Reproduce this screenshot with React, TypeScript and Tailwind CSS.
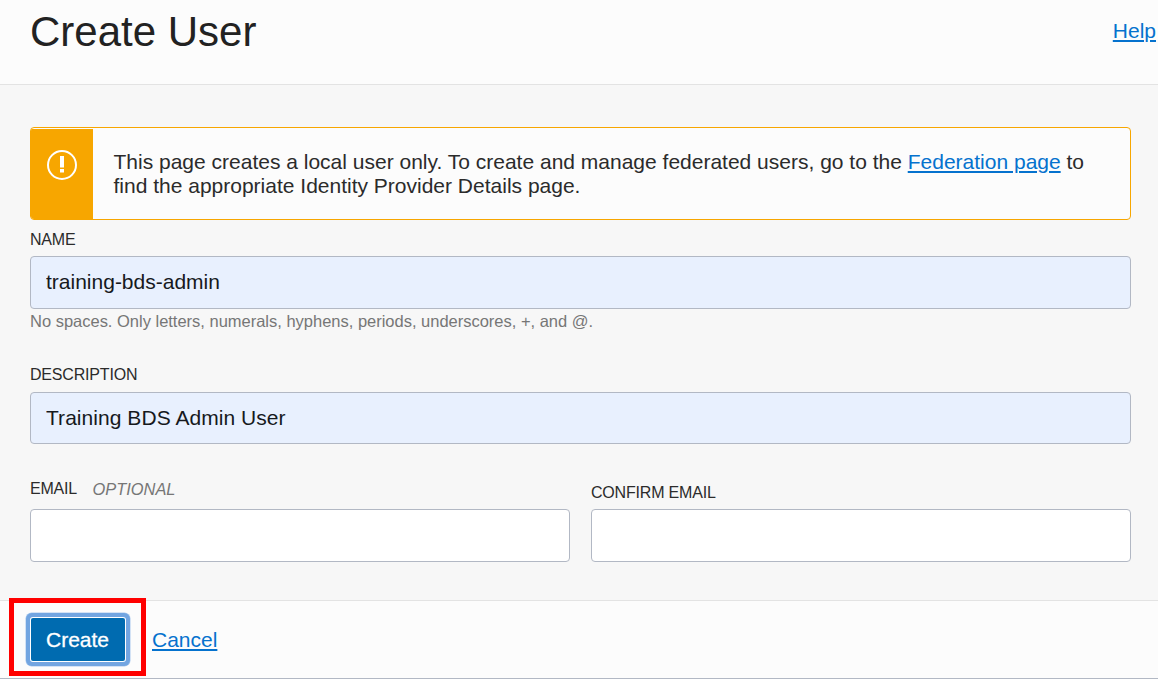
import React from "react";

const inputClass =
  "block w-full rounded-[4px] border border-[#b2b8c4] px-[15px] text-[21px] text-[#16191d] outline-none";
const labelClass = "text-[16px] leading-[20px] tracking-[-0.19px] text-[#2b2b2b] uppercase";
const linkClass = "text-[#0572ce] underline decoration-2 underline-offset-2";

function WarningIcon() {
  return (
    <svg className="h-[30px] w-[30px]" viewBox="0 0 30 30" fill="none">
      <circle cx="15" cy="15" r="14" stroke="#fff" strokeWidth="2" />
      <rect x="13" y="6" width="4" height="11.5" fill="#fff" />
      <rect x="13" y="19" width="4" height="3.5" fill="#fff" />
    </svg>
  );
}

export default function App() {
  return (
    <div className="flex h-[679px] w-[1158px] flex-col overflow-hidden border-b border-[#b2b8c4] bg-[#f7f7f7] font-['Liberation_Sans',Arial,sans-serif] text-[21px] text-[#2b2b2b]">
      <header className="flex h-[85px] shrink-0 items-start justify-between border-b border-[#e3e3e3] bg-[#fcfcfc] pr-[2px] pl-[30px]">
        <h1 className="pt-[8px] text-[42px] leading-[48px] text-[#222]">Create User</h1>
        <a href="#" className={`${linkClass} pt-[19px] leading-[24px]`}>Help</a>
      </header>

      <main className="flex h-[515px] shrink-0 flex-col pt-[42px] pr-[27px] pl-[30px]">
        <div className="flex h-[93px] shrink-0 overflow-hidden rounded-[4px] border border-[#f7a600] bg-[#fcfcfc]">
          <div className="mt-px flex w-[62px] shrink-0 justify-center bg-[#f7a600] pt-[21px]">
            <WarningIcon />
          </div>
          <p className="pt-[22px] pl-[20.5px] leading-[24px] whitespace-nowrap">
            This page creates a local user only. To create and manage federated users, go to the{" "}
            <a href="#" className={linkClass}>Federation page</a> to
            <br />
            find the appropriate Identity Provider Details page.
          </p>
        </div>

        <label htmlFor="name" className={`${labelClass} mt-[10px]`}>Name</label>
        <input id="name" defaultValue="training-bds-admin" className={`${inputClass} mt-[6px] h-[53px] shrink-0 bg-[#e8f0fe] pb-[2px]`} />
        <p className="mt-[2px] text-[16.5px] leading-[20px] tracking-[-0.01px] text-[#767676]">
          No spaces. Only letters, numerals, hyphens, periods, underscores, +, and @.
        </p>

        <label htmlFor="description" className={`${labelClass} mt-[34px]`}>Description</label>
        <input id="description" defaultValue="Training BDS Admin User" className={`${inputClass} mt-[7px] h-[52px] shrink-0 bg-[#e8f0fe] tracking-[0.05px]`} />

        <div className="mt-[35px] grid grid-cols-2 gap-[21px]">
          <div>
            <div className="flex h-[30px] gap-[15.5px]">
              <label htmlFor="email" className={labelClass}>Email</label>
              <span className="text-[16.4px] leading-[20px] text-[#767676] uppercase italic">Optional</span>
            </div>
            <input id="email" className={`${inputClass} h-[53px] bg-white`} />
          </div>
          <div>
            <div className="flex h-[30px] pt-[4px]">
              <label htmlFor="confirm" className={labelClass}>Confirm Email</label>
            </div>
            <input id="confirm" className={`${inputClass} h-[53px] bg-white`} />
          </div>
        </div>
      </main>

      <footer className="relative flex flex-1 items-start border-t border-[#e3e3e3] bg-[#fcfcfc] pt-[17px] pl-[31px]">
        <button className="h-[43px] w-[94px] rounded-[2px] bg-[#006bb0] pr-px text-[21px] text-white shadow-[0_0_0_1px_#ffffff,0_0_0_5px_#72a5e1,0_0_0_5.5px_#a9c8ed] [-webkit-text-stroke:0.3px_white]">
          Create
        </button>
        <a href="#" className={`${linkClass} ml-[27px] pt-[10px] leading-[24px]`}>Cancel</a>
        <div className="pointer-events-none absolute top-[-3px] left-[9px] h-[78px] w-[137px] border-5 border-[#ff0000]" />
      </footer>
    </div>
  );
}
